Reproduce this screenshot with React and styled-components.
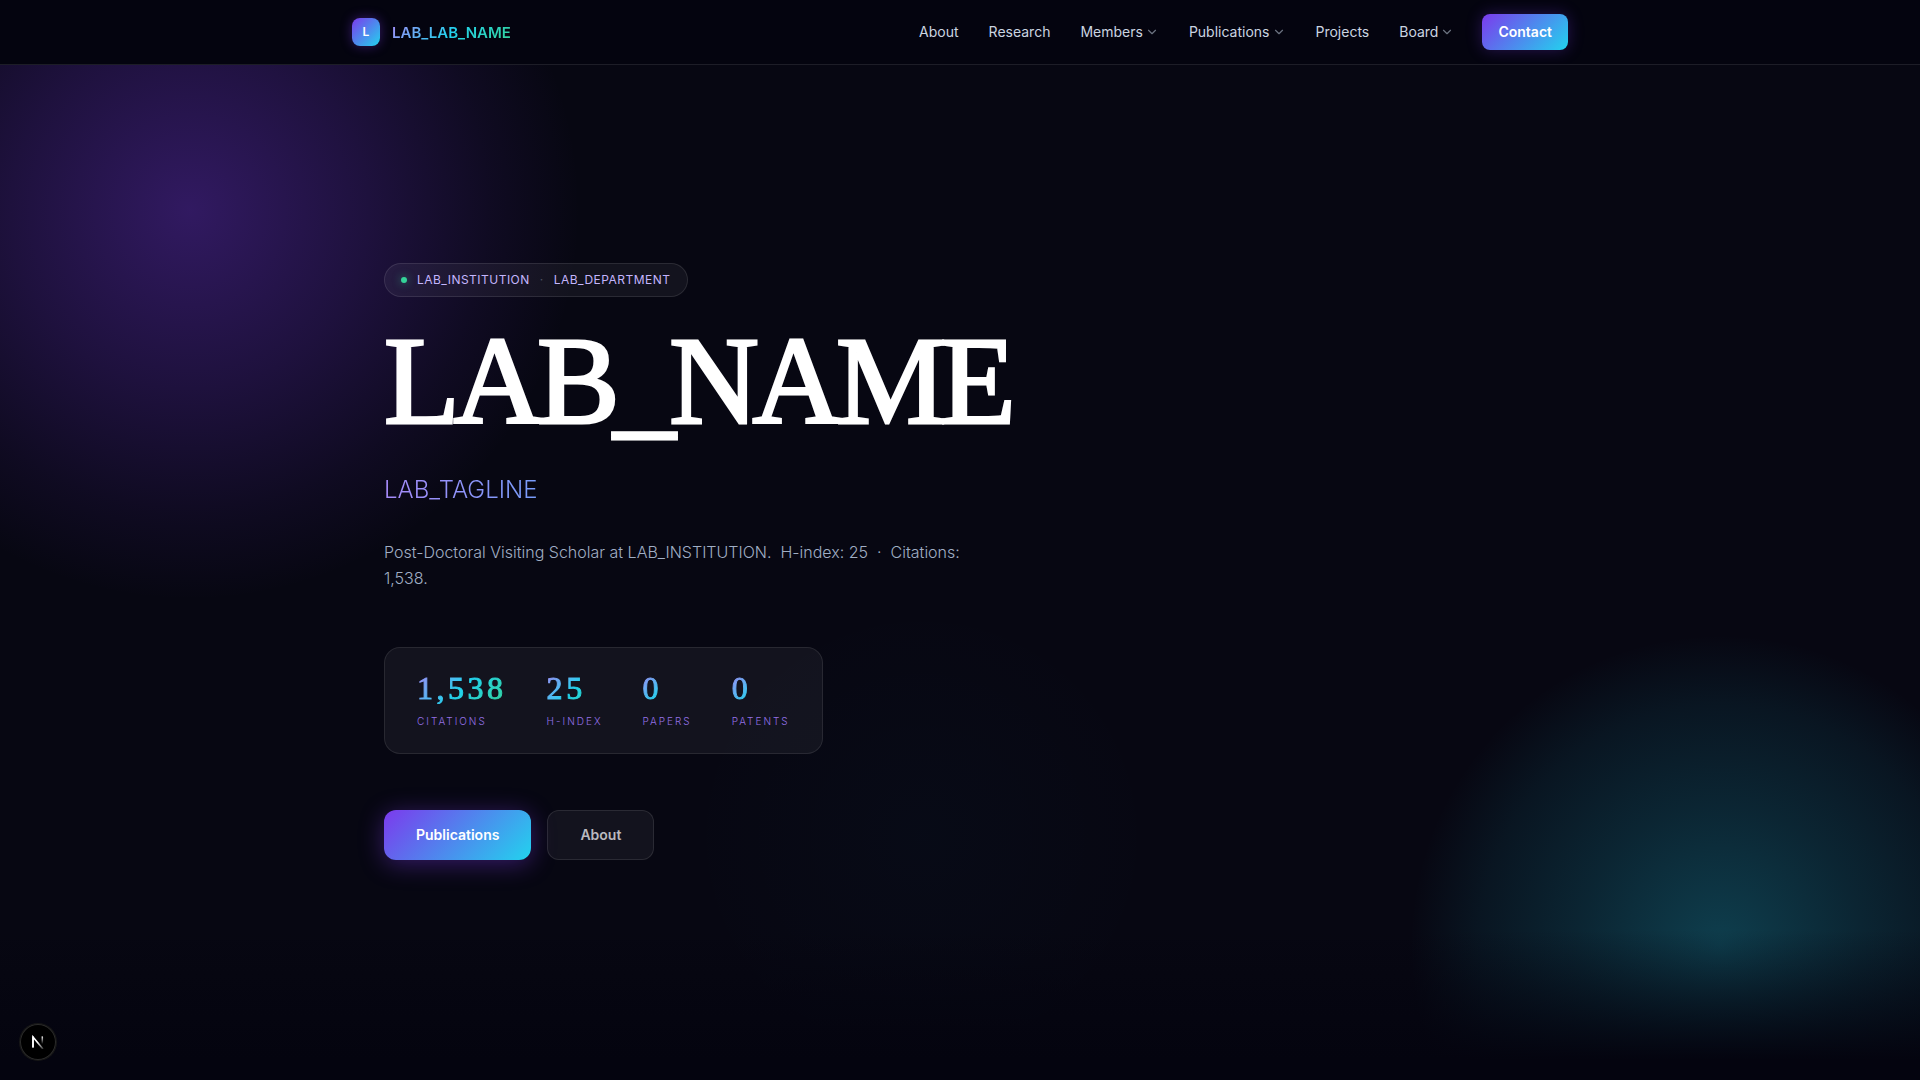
import styled, { createGlobalStyle } from "styled-components"
import { ChevronDown } from "lucide-react"

const GlobalStyle = createGlobalStyle`
    * {
        box-sizing: border-box;
        margin: 0;
        padding: 0;
    }
    body {
        background: #04040f;
        color: #fff;
        font-family: Inter, "Liberation Sans", sans-serif;
        -webkit-font-smoothing: antialiased;
    }
    a {
        color: inherit;
        text-decoration: none;
    }
`;

const accent = "linear-gradient(135deg, #7c3aed, #22d3ee)";
const rainbow = "linear-gradient(135deg, #a78bfa 0%, #22d3ee 50%, #34d399 100%)";

const Page = styled.div`
    display: flex;
    flex-direction: column;
    min-height: 100vh;
`;

const Header = styled.header`
    background: #04040f;
    border-bottom: 1px solid #1d1d27;
`;

const HeaderInner = styled.div`
    display: flex;
    align-items: center;
    justify-content: space-between;
    max-width: 1280px;
    height: 64px;
    margin: 0 auto;
    padding: 0 32px;
`;

const Brand = styled.a`
    display: flex;
    align-items: center;
    gap: 12px;
`;

const Mark = styled.span`
    display: flex;
    align-items: center;
    justify-content: center;
    width: 28px;
    height: 28px;
    border-radius: 8px;
    background: ${accent};
    box-shadow: 0 0 12px rgba(124, 58, 237, .4);
    font-size: 12px;
    font-weight: 600;
    line-height: 16px;
`;

const BrandName = styled.span`
    background: ${rainbow};
    background-clip: text;
    color: transparent;
    font-size: 15px;
    font-weight: 600;
`;

const Nav = styled.nav`
    display: flex;
    align-items: center;
    gap: 28px;
`;

const NavList = styled.div`
    display: flex;
    align-items: center;
    gap: 30px;
`;

const NavLink = styled.a`
    display: flex;
    align-items: center;
    gap: 2px;
    color: #cbd5e1;
    font-size: 14px;
    line-height: 20px;

    svg {
        color: #6b7280;
    }
`;

const Contact = styled.a`
    padding: 0 16px;
    border-radius: 8px;
    background: ${accent};
    box-shadow: 0 0 16px rgba(124, 58, 237, .3);
    font-size: 14px;
    font-weight: 600;
    line-height: 36px;
`;

const Hero = styled.main`
    flex: 1;
    display: flex;
    align-items: center;
    background:
        linear-gradient(to top, #04040f 20px, rgba(4, 4, 15, 0) 150px),
        radial-gradient(circle 390px at 190px 145px, rgba(124, 58, 237, .36), rgba(124, 58, 237, .2) 45%, rgba(124, 58, 237, .07) 78%, rgba(124, 58, 237, 0)),
        radial-gradient(circle 310px at calc(100% - 200px) calc(100% - 135px), rgba(34, 211, 238, .27), rgba(34, 211, 238, .15) 45%, rgba(34, 211, 238, .07) 78%, rgba(34, 211, 238, 0)),
        radial-gradient(circle 240px at 48% 76%, rgba(34, 180, 238, .02), rgba(34, 180, 238, 0)),
        #070712;
`;

const HeroInner = styled.div`
    display: flex;
    flex-direction: column;
    align-items: flex-start;
    width: 100%;
    max-width: 1216px;
    margin: 0 auto;
    padding: 40px 32px 62px;
`;

const Badge = styled.div`
    display: flex;
    align-items: center;
    gap: 10px;
    height: 34px;
    padding: 0 16px;
    border: 1px solid rgba(255, 255, 255, .1);
    border-radius: 17px;
    background: rgba(255, 255, 255, .05);
    color: #c4b5fd;
    font-size: 12px;
    line-height: 16px;
    letter-spacing: .04em;
`;

const Dot = styled.span`
    width: 6px;
    height: 6px;
    border-radius: 50%;
    background: #34d399;
    box-shadow: 0 0 8px rgba(52, 211, 153, .6);
`;

const Separator = styled.span`
    color: #4b5563;
`;

const Title = styled.h1`
    margin-top: 24px;
    font-family: "Liberation Serif", serif;
    font-size: 124px;
    font-weight: 400;
    line-height: 122px;
    letter-spacing: -.05em;
    -webkit-text-stroke: 3px #fff;
`;

const Tagline = styled.p`
    align-self: stretch;
    max-width: 576px;
    margin-top: 30px;
    background: linear-gradient(90deg, #a78bfa, #60a5fa 40%, #22d3ee);
    background-clip: text;
    color: transparent;
    font-size: 24px;
    font-weight: 300;
    line-height: 34px;
`;

const Bio = styled.p`
    max-width: 576px;
    margin-top: 32px;
    color: #a0aec4;
    font-size: 16px;
    font-weight: 300;
    line-height: 26px;
`;

const Stats = styled.dl`
    display: flex;
    gap: 40px;
    margin-top: 56px;
    padding: 24px 32px;
    border: 1px solid rgba(255, 255, 255, .09);
    border-radius: 16px;
    background: rgba(255, 255, 255, .05);
`;

const Stat = styled.div`
    display: flex;
    flex-direction: column-reverse;
    gap: 10px;
`;

const StatValue = styled.dd`
    background: ${rainbow};
    background-clip: text;
    color: transparent;
    font-family: "Liberation Serif", serif;
    font-size: 32px;
    line-height: 32px;
    letter-spacing: .11em;
    -webkit-text-stroke: 1px transparent;
`;

const StatLabel = styled.dt`
    color: #9571e6;
    font-size: 10px;
    font-weight: 300;
    line-height: 15px;
    letter-spacing: .2em;
    text-transform: uppercase;
`;

const Actions = styled.div`
    display: flex;
    gap: 16px;
    margin-top: 56px;
`;

const Button = styled.a`
    display: flex;
    align-items: center;
    height: 50px;
    padding: 0 32px;
    border: ${({ $primary }) => ($primary ? "none" : "1px solid rgba(255, 255, 255, .1)")};
    border-radius: 12px;
    background: ${({ $primary }) => ($primary ? accent : "rgba(255, 255, 255, .05)")};
    box-shadow: ${({ $primary }) => ($primary ? "0 4px 24px rgba(124, 58, 237, .4)" : "none")};
    color: ${({ $primary }) => ($primary ? "#fff" : "#b9b9be")};
    font-size: 14px;
    font-weight: 600;
    line-height: 20px;
`;

const DevButton = styled.button`
    position: fixed;
    left: 20px;
    bottom: 20px;
    display: flex;
    align-items: center;
    justify-content: center;
    width: 36px;
    height: 36px;
    border: none;
    border-radius: 50%;
    background: #000;
    box-shadow: 0 0 0 1px #171717, inset 0 0 0 1px #2b2b2b;
`;

const links = [
    { label: "About" },
    { label: "Research" },
    { label: "Members", menu: true },
    { label: "Publications", menu: true },
    { label: "Projects" },
    { label: "Board", menu: true },
];

const stats = [
    { label: "Citations", value: "1,538" },
    { label: "H-Index", value: "25" },
    { label: "Papers", value: "0" },
    { label: "Patents", value: "0" },
];

const NextIcon = () => (
    <svg width="14" height="14" viewBox="0 0 14 14" fill="none" aria-hidden="true">
        <defs>
            <linearGradient id="diag" x1="7" y1="7" x2="12" y2="14" gradientUnits="userSpaceOnUse">
                <stop stopColor="#fff"/>
                <stop offset="1" stopColor="#fff" stopOpacity=".2"/>
            </linearGradient>
            <linearGradient id="stem" x1="11" y1="1" x2="11" y2="9" gradientUnits="userSpaceOnUse">
                <stop stopColor="#fff"/>
                <stop offset="1" stopColor="#fff" stopOpacity="0"/>
            </linearGradient>
        </defs>
        <path d="M2 12.5V2L12 14" stroke="url(#diag)" strokeWidth="1.6"/>
        <path d="M2 12.5V1.6" stroke="#fff" strokeWidth="1.6"/>
        <path d="M11.3 1.4V9" stroke="url(#stem)" strokeWidth="1.5"/>
    </svg>
)

const App = () => {
    return (
        <Page>
            <GlobalStyle/>
            <Header>
                <HeaderInner>
                    <Brand href="#">
                        <Mark>L</Mark>
                        <BrandName>LAB_LAB_NAME</BrandName>
                    </Brand>
                    <Nav>
                        <NavList>
                            {links.map((link) => (
                                <NavLink href="#" key={link.label}>
                                    {link.label}
                                    {link.menu && <ChevronDown size={14}/>}
                                </NavLink>
                            ))}
                        </NavList>
                        <Contact href="#">Contact</Contact>
                    </Nav>
                </HeaderInner>
            </Header>
            <Hero>
                <HeroInner>
                    <Badge>
                        <Dot/>
                        <span>LAB_INSTITUTION</span>
                        <Separator>·</Separator>
                        <span>LAB_DEPARTMENT</span>
                    </Badge>
                    <Title>LAB_NAME</Title>
                    <Tagline>LAB_TAGLINE</Tagline>
                    <Bio>
                        Post-Doctoral Visiting Scholar at LAB_INSTITUTION. &nbsp;H-index: 25 &nbsp;·&nbsp; Citations: 1,538.
                    </Bio>
                    <Stats>
                        {stats.map((stat) => (
                            <Stat key={stat.label}>
                                <StatLabel>{stat.label}</StatLabel>
                                <StatValue>{stat.value}</StatValue>
                            </Stat>
                        ))}
                    </Stats>
                    <Actions>
                        <Button href="#" $primary>Publications</Button>
                        <Button href="#">About</Button>
                    </Actions>
                </HeroInner>
            </Hero>
            <DevButton aria-label="Open developer tools">
                <NextIcon/>
            </DevButton>
        </Page>
    )
}

export default App
